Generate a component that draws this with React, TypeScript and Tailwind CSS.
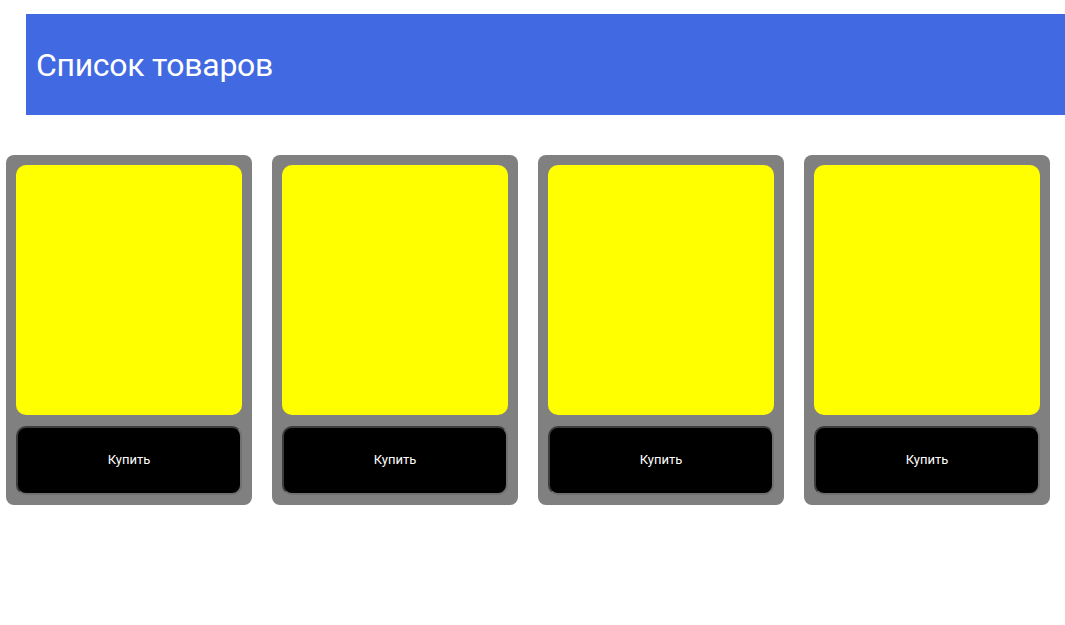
const items = [1, 2, 3, 4];

export default function App() {
  return (
    <div className="min-h-[625px] bg-white font-['Roboto',sans-serif]">
      <header className="ml-[26px] mt-[14px] h-[101px] bg-[#4169e1] flex items-center pl-[10px]">
        <h1 className="text-white text-[32px] leading-none tracking-[-0.3px] pt-[1px]">Список товаров</h1>
      </header>

      <div className="mt-[40px] ml-[6px] flex gap-[20px]">
        {items.map((i) => (
          <div key={i} className="w-[246px] h-[350px] bg-[#808080] rounded-[8px] p-[10px] flex flex-col">
            <div className="h-[250px] bg-[#ffff00] rounded-[10px]" />
            <button className="mt-[11px] h-[69px] rounded-[10px] bg-black text-white text-[13px] pb-[2px] border-2 border-t-[#3c3c3c] border-l-[#3c3c3c] border-r-[#707070] border-b-[#707070]">
              Купить
            </button>
          </div>
        ))}
      </div>
    </div>
  );
}
